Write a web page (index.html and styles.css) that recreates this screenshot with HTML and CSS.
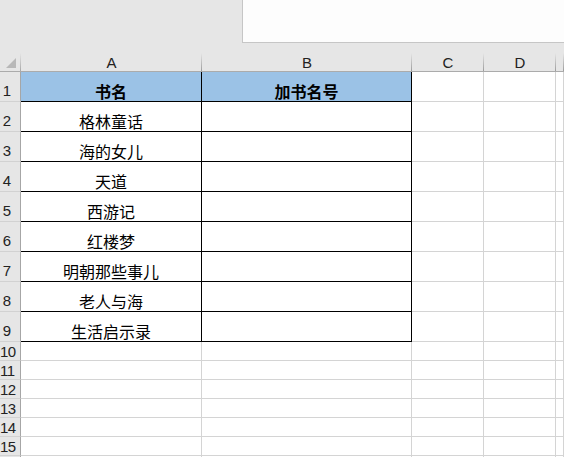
FILE: index.html
```html
<!DOCTYPE html>
<html lang="zh-CN">
<head>
<meta charset="utf-8">
<link rel="stylesheet" href="styles.css">
</head>
<body>
<div class="top">
  <div class="namebox"></div>
</div>
<div class="sheet">
  <div class="corner"><svg width="20" height="18" viewBox="0 0 20 18"><polygon points="6,15 16,15 16,5" fill="#b8b8b8"/></svg></div>
  <div class="ch">A</div><div class="ch">B</div><div class="ch">C</div><div class="ch">D</div><div class="ch"></div>

  <div class="rh tall"><span>1</span></div>
  <div class="c hd bk">书名</div><div class="c hd bk">加书名号</div><div class="c"></div><div class="c"></div><div class="c"></div>

  <div class="rh tall"><span>2</span></div>
  <div class="c bk">格林童话</div><div class="c bk"></div><div class="c"></div><div class="c"></div><div class="c"></div>

  <div class="rh tall"><span>3</span></div>
  <div class="c bk">海的女儿</div><div class="c bk"></div><div class="c"></div><div class="c"></div><div class="c"></div>

  <div class="rh tall"><span>4</span></div>
  <div class="c bk">天道</div><div class="c bk"></div><div class="c"></div><div class="c"></div><div class="c"></div>

  <div class="rh tall"><span>5</span></div>
  <div class="c bk">西游记</div><div class="c bk"></div><div class="c"></div><div class="c"></div><div class="c"></div>

  <div class="rh tall"><span>6</span></div>
  <div class="c bk">红楼梦</div><div class="c bk"></div><div class="c"></div><div class="c"></div><div class="c"></div>

  <div class="rh tall"><span>7</span></div>
  <div class="c bk">明朝那些事儿</div><div class="c bk"></div><div class="c"></div><div class="c"></div><div class="c"></div>

  <div class="rh tall"><span>8</span></div>
  <div class="c bk">老人与海</div><div class="c bk"></div><div class="c"></div><div class="c"></div><div class="c"></div>

  <div class="rh tall"><span>9</span></div>
  <div class="c bk">生活启示录</div><div class="c bk"></div><div class="c"></div><div class="c"></div><div class="c"></div>

  <div class="rh"><span>10</span></div><div class="c"></div><div class="c"></div><div class="c"></div><div class="c"></div><div class="c"></div>
  <div class="rh"><span>11</span></div><div class="c"></div><div class="c"></div><div class="c"></div><div class="c"></div><div class="c"></div>
  <div class="rh"><span>12</span></div><div class="c"></div><div class="c"></div><div class="c"></div><div class="c"></div><div class="c"></div>
  <div class="rh"><span>13</span></div><div class="c"></div><div class="c"></div><div class="c"></div><div class="c"></div><div class="c"></div>
  <div class="rh"><span>14</span></div><div class="c"></div><div class="c"></div><div class="c"></div><div class="c"></div><div class="c"></div>
  <div class="rh"><span>15</span></div><div class="c"></div><div class="c"></div><div class="c"></div><div class="c"></div><div class="c"></div>
  <div class="rh"></div><div class="c"></div><div class="c"></div><div class="c"></div><div class="c"></div><div class="c"></div>
</div>
</body>
</html>
```

FILE: styles.css
```css
html, body {
  margin: 0;
  padding: 0;
  width: 564px;
  height: 457px;
  overflow: hidden;
  background: #ffffff;
}

.top {
  height: 53px;
  background: #e6e6e6;
  display: flex;
  justify-content: flex-end;
}

.namebox {
  width: 322px;
  height: 43px;
  box-sizing: border-box;
  background: #fdfdfd;
  border-left: 1px solid #c6c6c6;
  border-bottom: 1px solid #c6c6c6;
}

.sheet {
  display: grid;
  grid-template-columns: 21px 181px 210px 72px 72px 8px;
  grid-template-rows: 19px repeat(9, 30px) repeat(7, 19px);
  font-family: "Noto Sans CJK SC", "Noto Sans", sans-serif;
  font-size: 16px;
  color: #000;
}

.corner {
  box-sizing: border-box;
  background: linear-gradient(to bottom, #e6e6e6, #a8a8a8) right top / 1px 100% no-repeat, #e6e6e6;
  border-bottom: 1px solid #ababab;
}

.corner svg {
  display: block;
}

.ch {
  box-sizing: border-box;
  background: linear-gradient(to bottom, #e6e6e6, #9c9c9c) right top / 1px 100% no-repeat, #e6e6e6;
  border-bottom: 1px solid #ababab;
  font-family: "Liberation Sans", "Noto Sans", sans-serif;
  font-size: 15px;
  line-height: 15px;
  color: #222;
  display: flex;
  justify-content: center;
  align-items: flex-end;
  padding-bottom: 1px;
}

.rh {
  box-sizing: border-box;
  background: #e6e6e6;
  border-right: 1px solid #a6a6a6;
  border-bottom: 1px solid #d2d2d2;
  font-family: "Liberation Sans", "Noto Sans", sans-serif;
  font-size: 15px;
  line-height: 15px;
  color: #222;
  display: flex;
  align-items: flex-end;
  padding-bottom: 1px;
  overflow: hidden;
}

.rh span {
  display: block;
  width: 13px;
  text-align: center;
  letter-spacing: -0.6px;
  white-space: nowrap;
  flex-shrink: 0;
}

.rh.tall {
  padding-bottom: 3px;
}

.c {
  box-sizing: border-box;
  border-right: 1px solid #d4d4d4;
  border-bottom: 1px solid #d4d4d4;
  display: flex;
  justify-content: center;
  align-items: flex-end;
  line-height: 16px;
  padding-bottom: 2px;
  white-space: nowrap;
}

.bk {
  border-right-color: #000;
  border-bottom-color: #000;
}

.hd {
  background: #9bc2e6;
  font-weight: bold;
}
```
